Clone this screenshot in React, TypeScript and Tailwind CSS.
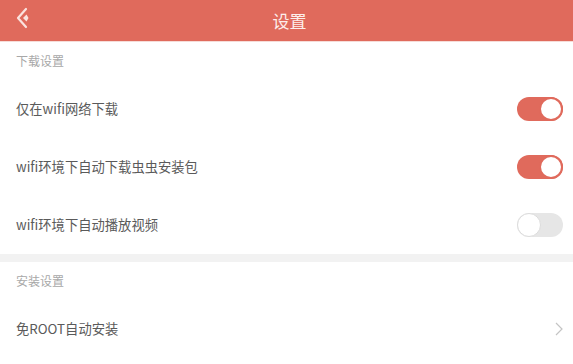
import React, { useState } from "react";

const font = { fontFamily: '"Noto Sans CJK SC", "Noto Sans", sans-serif' };

type ToggleProps = {
  on: boolean;
  onChange: () => void;
};
function Toggle({ on, onChange }: ToggleProps): React.ReactNode {
  return (
    <button
      onClick={onChange}
      className={
        on
          ? "flex h-[24px] w-[46px] items-center justify-end rounded-full bg-[#e06a5c] p-0"
          : "flex h-[24px] w-[46px] items-center justify-start rounded-full bg-[#e6e6e6] p-0"
      }
    >
      <span
        className={
          on
            ? "block h-[24px] w-[24px] rounded-full border-2 border-[#e06a5c] bg-white"
            : "block h-[24px] w-[24px] rounded-full border border-[#dcdcdc] bg-white"
        }
      />
    </button>
  );
}

function SectionTitle({ title }: { title: string }): React.ReactNode {
  return (
    <div className="flex h-[38px] items-center px-4 text-[12px] text-[#a8a8a8]">
      {title}
    </div>
  );
}

export default function App(): React.ReactNode {
  const [wifiOnly, setWifiOnly] = useState(true);
  const [autoPkg, setAutoPkg] = useState(true);
  const [autoVideo, setAutoVideo] = useState(false);

  const rows = [
    { label: "仅在wifi网络下载", on: wifiOnly, toggle: () => setWifiOnly(!wifiOnly) },
    { label: "wifi环境下自动下载虫虫安装包", on: autoPkg, toggle: () => setAutoPkg(!autoPkg) },
    { label: "wifi环境下自动播放视频", on: autoVideo, toggle: () => setAutoVideo(!autoVideo) },
  ];

  return (
    <div className="h-[364px] w-[573px] overflow-hidden bg-white" style={font}>
      {/* Header */}
      <header className="relative flex h-[41px] items-center justify-center bg-[#e06a5c]">
        <button className="absolute left-[15px] top-[7px] p-0">
          <svg width="16" height="22" viewBox="0 0 16 22" fill="none">
            <path
              d="M11 2 L3 11 L11 20"
              stroke="#fbe3df"
              strokeWidth="2.2"
              strokeLinecap="round"
              strokeLinejoin="round"
            />
            <path d="M8 11 L11.5 7.5 L13.5 11 L11.5 14.5 Z" fill="#fbe3df" />
          </svg>
        </button>
        <h1 className="pl-[6px] text-[17px] text-[#fdeeeb]">设置</h1>
      </header>
      <div className="h-px bg-[#f6dcd8]" />

      {/* Download settings */}
      <SectionTitle title="下载设置" />
      {rows.map((r) => (
        <div
          key={r.label}
          className="flex h-[58px] items-center justify-between pl-4 pr-[10px] text-[13.3px] text-[#5a5a5a]"
        >
          <span>{r.label}</span>
          <Toggle on={r.on} onChange={r.toggle} />
        </div>
      ))}

      <div className="h-[8px] bg-[#f2f2f2]" />

      {/* Install settings */}
      <SectionTitle title="安装设置" />
      <div className="flex h-[58px] items-center justify-between pl-4 pr-[10px] text-[13.3px] text-[#5a5a5a]">
        <span>免ROOT自动安装</span>
        <svg width="8" height="14" viewBox="0 0 8 14" fill="none">
          <path d="M1 1 L7 7 L1 13" stroke="#c4c4c4" strokeWidth="1.2" />
        </svg>
      </div>
    </div>
  );
}
